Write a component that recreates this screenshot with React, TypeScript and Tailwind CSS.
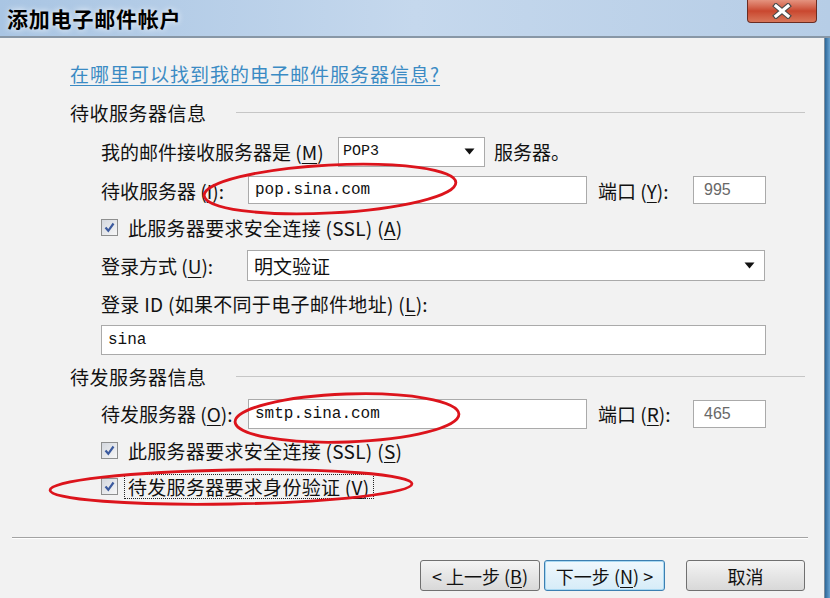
import React from 'react';

const cjk = "font-['Noto_Sans_CJK_SC','Noto_Sans',sans-serif]";
const mono = "font-['Liberation_Mono',monospace]";

const Key = ({ k }: { k: string }) => (
  <>
    (<span className="underline underline-offset-[3px]">{k}</span>)
  </>
);

const Check = () => (
  <span className="w-[17px] h-[17px] shrink-0 border border-[#8e8f8f] bg-gradient-to-br from-[#d3d7de] to-[#f7f7f7] flex items-center justify-center">
    <svg width="13" height="13" viewBox="0 0 13 13">
      <path d="M2.5 6.5 L5.3 9.8 L10.5 2.5" fill="none" stroke="#3b5a9e" strokeWidth="2.2" />
    </svg>
  </span>
);

const Arrow = () => (
  <svg width="11" height="7" viewBox="0 0 11 7">
    <path d="M0.5 0.5 H10.5 L5.5 6.5 Z" fill="#111" />
  </svg>
);

const Input = ({ w, h, children }: { w: string; h: string; children?: React.ReactNode }) => (
  <div className={`${w} ${h} bg-white border border-[#aaaaaa] flex items-center`}>{children}</div>
);

const Header = ({ text }: { text: string }) => (
  <div className="flex items-center pl-[70px] pr-[19px] h-full">
    <span className="tracking-[0.5px]">{text}</span>
    <div className="ml-[29px] flex-1 h-px bg-[#c6c6c6]" />
  </div>
);

export default function App() {
  return (
    <div className={`relative w-[830px] h-[598px] overflow-hidden bg-[#f2f2f2] text-[#111] text-[19px] leading-none ${cjk}`}>
      {/* title bar */}
      <div className="h-[36px] flex items-center justify-between bg-gradient-to-r from-[#a9c5e3] via-[#c5d8ed] to-[#b6cde6]">
        <span className="ml-[7px] text-[21px] font-bold tracking-[0.8px] text-black [text-shadow:0_0_6px_#ffffff]">添加电子邮件帐户</span>
        <div className="self-start mr-[13px] w-[70px] h-[23px] rounded-b-[4px] border border-t-0 border-[#6a2c22] bg-gradient-to-b from-[#e4937f] via-[#c9472f] to-[#d8765a] flex items-center justify-center">
          <svg width="22" height="16" viewBox="0 0 22 16">
            <path d="M5 3 L17 13 M17 3 L5 13" stroke="#4a4a4a" strokeWidth="5.5" strokeLinecap="square" />
            <path d="M5 3 L17 13 M17 3 L5 13" stroke="#ffffff" strokeWidth="3.2" strokeLinecap="square" />
          </svg>
        </div>
      </div>
      <div className="h-[2px] bg-[#8897a6]" />

      <div className="flex h-[560px]">
        <div className="flex-1 flex flex-col pt-[16px]">
          {/* link */}
          <div className="h-[38px] flex items-center pl-[70px]">
            <span className="text-[#3b8bc4] tracking-[1px] underline underline-offset-[3px]">在哪里可以找到我的电子邮件服务器信息?</span>
          </div>

          <div className="h-[40px]"><Header text="待收服务器信息" /></div>

          <div className="h-[39px] flex items-center pl-[101px]">
            <span className="w-[237px]">我的邮件接收服务器是 <Key k="M" /></span>
            <div className="w-[147px] h-[30px] bg-white border border-[#aaaaaa] flex items-center justify-between pl-[4px] pr-[9px]">
              <span className={`${mono} text-[15px]`}>POP3</span>
              <Arrow />
            </div>
            <span className="ml-[9px]">服务器。</span>
          </div>

          <div className="h-[38px] flex items-center pl-[101px]">
            <span className="w-[147px]">待收服务器 <Key k="I" />:</span>
            <Input w="w-[339px]" h="h-[28px]">
              <span className={`${mono} text-[16px] pl-[6px]`}>pop.sina.com</span>
            </Input>
            <span className="ml-[11px] w-[95px]">端口 <Key k="Y" />:</span>
            <Input w="w-[73px]" h="h-[28px]">
              <span className="font-['Liberation_Sans',sans-serif] text-[16px] text-[#686868] pl-[10px]">995</span>
            </Input>
          </div>

          <div className="h-[37px] flex items-center pl-[101px]">
            <Check />
            <span className="ml-[10px] tracking-[0.3px]">此服务器要求安全连接 (SSL) <Key k="A" /></span>
          </div>

          <div className="h-[39px] flex items-center pl-[101px]">
            <span className="w-[146px]">登录方式 <Key k="U" />:</span>
            <div className="w-[518px] h-[31px] bg-white border border-[#aaaaaa] flex items-center justify-between pl-[6px] pr-[9px]">
              <span>明文验证</span>
              <Arrow />
            </div>
          </div>

          <div className="h-[37px] flex items-center pl-[101px]">
            <span className="tracking-[0.3px]">登录 ID (如果不同于电子邮件地址) <Key k="L" />:</span>
          </div>

          <div className="h-[36px] flex items-center pl-[101px]">
            <Input w="w-[665px]" h="h-[30px]">
              <span className={`${mono} text-[16px] pl-[6px]`}>sina</span>
            </Input>
          </div>

          <div className="h-[37px]"><Header text="待发服务器信息" /></div>

          <div className="h-[37px] flex items-center pl-[101px]">
            <span className="w-[147px]">待发服务器 <Key k="O" />:</span>
            <Input w="w-[339px]" h="h-[30px]">
              <span className={`${mono} text-[16px] pl-[6px]`}>smtp.sina.com</span>
            </Input>
            <span className="ml-[11px] w-[95px]">端口 <Key k="R" />:</span>
            <Input w="w-[73px]" h="h-[28px]">
              <span className="font-['Liberation_Sans',sans-serif] text-[16px] text-[#686868] pl-[10px]">465</span>
            </Input>
          </div>

          <div className="h-[37px] flex items-center pl-[101px]">
            <Check />
            <span className="ml-[10px] tracking-[0.3px]">此服务器要求安全连接 (SSL) <Key k="S" /></span>
          </div>

          <div className="h-[35px] flex items-center pl-[101px]">
            <Check />
            <span className="ml-[6px] px-[3px] py-[2px] tracking-[0.3px] border border-dotted border-[#222]">待发服务器要求身份验证 <Key k="V" /></span>
          </div>

          {/* separator */}
          <div className="mt-[33px] ml-[12px] mr-[16px] h-[2px] border-t border-[#a3a3a3] border-b border-b-white" />

          {/* buttons */}
          <div className="mt-[21px] flex justify-end pr-[19px] text-[18px]">
            <button className="w-[120px] h-[31px] rounded-[3px] border border-[#707070] bg-gradient-to-b from-[#f4f4f4] to-[#d8d8d8] flex items-center justify-center">
              &lt; 上一步 <Key k="B" />
            </button>
            <button className="ml-[4px] w-[121px] h-[31px] rounded-[3px] border border-[#3c7fb1] shadow-[inset_0_0_0_1px_#a8d8f2] bg-gradient-to-b from-[#f0f8fd] to-[#d6ecf8] flex items-center justify-center">
              下一步 <Key k="N" /> &gt;
            </button>
            <button className="ml-[21px] w-[119px] h-[31px] rounded-[3px] border border-[#707070] bg-gradient-to-b from-[#f4f4f4] to-[#d8d8d8] flex items-center justify-center">
              取消
            </button>
          </div>
        </div>
        {/* window frame */}
        <div className="w-[6px] border-l border-[#7d8d9c] bg-gradient-to-r from-[#2c6798] to-[#6aa4d2]" />
      </div>

      {/* red annotation ellipses */}
      <svg className="absolute inset-0 pointer-events-none" width="830" height="598">
        <ellipse cx="330" cy="189" rx="126" ry="24" transform="rotate(-3 330 189)" fill="none" stroke="#dc141c" strokeWidth="2.8" />
        <ellipse cx="347" cy="418" rx="112" ry="24" transform="rotate(-2 347 418)" fill="none" stroke="#dc141c" strokeWidth="2.8" />
        <ellipse cx="231" cy="487" rx="181" ry="17" transform="rotate(-1 231 487)" fill="none" stroke="#dc141c" strokeWidth="2.8" />
      </svg>
    </div>
  );
}
